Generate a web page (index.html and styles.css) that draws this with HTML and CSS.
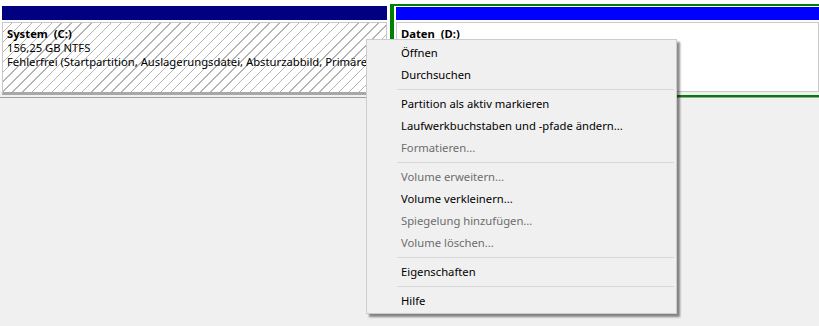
FILE: index.html
```html
<!doctype html>
<html>
<head>
<meta charset="utf-8">
<title>Datenträgerverwaltung</title>
<link rel="stylesheet" href="styles.css">
</head>

<body>
<div class="disk">
	<div class="part part-c">
		<div class="bar navy"></div>
		<div class="info hatched">
			<div class="name">System&nbsp; (C:)</div>
			<div>156,25 GB NTFS</div>
			<div>Fehlerfrei (Startpartition, Auslagerungsdatei, Absturzabbild, Primäre P</div>
		</div>
	</div>
	<div class="part part-d">
		<div class="bar blue"></div>
		<div class="info">
			<div class="name">Daten&nbsp; (D:)</div>
		</div>
	</div>
</div>

<!-- Kontextmenü -->
<ul class="menu">
	<li>Öffnen</li>
	<li>Durchsuchen</li>
	<li class="sep"></li>
	<li>Partition als aktiv markieren</li>
	<li>Laufwerkbuchstaben und -pfade ändern...</li>
	<li class="off">Formatieren...</li>
	<li class="sep"></li>
	<li class="off">Volume erweitern...</li>
	<li>Volume verkleinern...</li>
	<li class="off">Spiegelung hinzufügen...</li>
	<li class="off">Volume löschen...</li>
	<li class="sep"></li>
	<li>Eigenschaften</li>
	<li class="sep"></li>
	<li>Hilfe</li>
</ul>
</body>
</html>
```

FILE: styles.css
```css
	body{
		margin:0;
		height:326px;
		background:#f0f0f0;
		font-family:"Noto Sans","Open Sans",sans-serif;
		font-size:11.25px;
		color:#000;
		overflow:hidden;
		}
	.disk{
		display:flex;
		height:97px;
		background:linear-gradient(#fff 0 91px,#f0f0f0 91px);
		border-bottom:1px solid #a0a0a0;
		overflow:hidden;
		}
	.part{
		display:flex;
		flex-direction:column;
		}
	.part-c{
		width:385px;
		margin-left:2px;
		padding-top:6px;
		}
	.part-d{
		flex:1;
		margin:4px 0 0 3px;
		padding:1px 0 0 2px;
		border:solid #008000;
		border-width:2px 0 2px 4px;
		}
	.bar{
		height:14px;
		margin-bottom:2px;
		}
	.part-d .bar{
		height:13px;
		}
	.navy{
		background:#000080;
		}
	.blue{
		background:#0000ff;
		}
	.info{
		height:65px;
		padding:4px 4px 0 4px;
		border:1px solid #c8c8c8;
		border-bottom:3px solid #a8a8a8;
		line-height:14px;
		white-space:nowrap;
		overflow:hidden;
		background:#fff;
		}
	.part-d .info{
		height:64px;
		border-bottom:1px solid #c8c8c8;
		}
	.hatched{
		background:#fff repeating-linear-gradient(135deg,#fff 0 6px,#b4b4b4 6px 7px);
		}
	.name{
		font-weight:bold;
		}
	.menu{
		position:absolute;
		left:366px;
		top:39px;
		width:309px;
		margin:0;
		padding:1px 0 2px 0;
		list-style:none;
		background:#f0f0f0;
		border:1px solid #cccccc;
		box-shadow:3px 3px 2px rgba(0,0,0,0.45);
		}
	.menu li{
		height:22px;
		line-height:24px;
		padding-left:34px;
		white-space:nowrap;
		}
	.menu .off{
		color:#6d6d6d;
		}
	.menu .sep{
		height:7px;
		margin:0 2px 0 30px;
		padding:0;
		background:linear-gradient(transparent 4px,#d7d7d7 4px 5px,transparent 5px);
		}
```
